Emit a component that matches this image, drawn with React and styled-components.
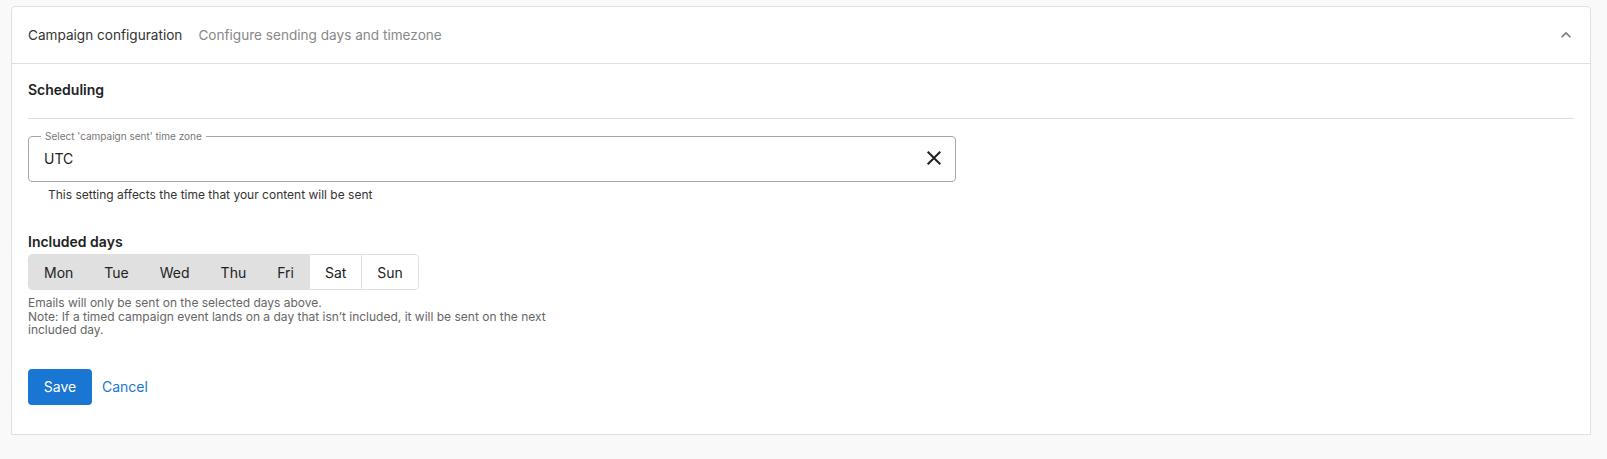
import styled, {createGlobalStyle} from 'styled-components';
import {useState} from "react";

const GlobalStyle = createGlobalStyle`
  html, body {
    margin: 0;
    padding: 0;
    background: #f9f9f9;
    font-family: Inter, "Noto Sans", "Liberation Sans", sans-serif;
    color: #222;
  }
  * { box-sizing: border-box; }
`;

const Page = styled.div`
  padding: 6px 16px 26px 11px;
`;

const Card = styled.section`
  background: #fff;
  border: 1px solid #e0e0e0;
  border-radius: 4px 4px 0 0;
`;

const Header = styled.div`
  display: flex;
  align-items: center;
  height: 57px;
  padding: 0 16px;
  border-bottom: 1px solid #e0e0e0;
  font-size: 13.6px;
`;

const Title = styled.span`
  color: #333;
`;

const Subtitle = styled.span`
  color: #888;
  margin-left: 16px;
  flex: 1;
`;

const ChevronButton = styled.span`
  display: flex;
  align-items: center;
  color: #777;
  margin-right: -2px;
`;

const Body = styled.div`
  padding: 16px 16px 29px 16px;
`;

const SectionTitle = styled.h3`
  margin: 0;
  font-size: 14px;
  line-height: 20px;
  font-weight: 600;
  color: #222;
`;

const Divider = styled.hr`
  border: 0;
  border-top: 1px solid #e0e0e0;
  margin: 18px 0 17px 0;
`;

const FieldBox = styled.div`
  position: relative;
  display: flex;
  align-items: center;
  width: 928px;
  height: 46px;
  padding: 0 14px 2px 15px;
  border: 1px solid #a8a8a8;
  border-radius: 4px;
  font-size: 14px;
  color: #222;
`;

const FieldLabel = styled.span`
  position: absolute;
  top: -7px;
  left: 12px;
  padding: 0 4px;
  background: #fff;
  font-size: 10px;
  line-height: 12px;
  color: #777;
`;

const FieldValue = styled.span`
  flex: 1;
`;

const ClearIcon = styled.span`
  display: flex;
  color: #222;
  margin-right: -5px;
`;

const HelperText = styled.div`
  margin: 5px 0 0 20px;
  font-size: 12px;
  line-height: 16px;
  color: #333;
`;

const DaysLabel = styled.div`
  margin-top: 29px;
  font-size: 14px;
  line-height: 20px;
  font-weight: 600;
  color: #222;
`;

const DayGroup = styled.div`
  display: inline-flex;
  margin-top: 2px;
  border: 1px solid #e0e0e0;
  border-radius: 4px;
  overflow: hidden;
`;

const DayButton = styled.button`
  height: 34px;
  padding: 0 15px;
  border: 0;
  border-left: 1px solid ${p => p.$selected ? 'transparent' : '#e0e0e0'};
  background: ${p => p.$selected ? '#e0e0e0' : '#fff'};
  font-family: inherit;
  font-size: 14px;
  color: #222;
  cursor: pointer;

  &:first-child {
    border-left: 0;
  }
`;

const Note = styled.div`
  margin-top: 6px;
  max-width: 540px;
  font-size: 12px;
  line-height: 13.5px;
  color: #666;
`;

const Actions = styled.div`
  display: flex;
  align-items: center;
  gap: 10px;
  margin-top: 32px;
`;

const SaveButton = styled.button`
  width: 64px;
  height: 36px;
  border: 0;
  border-radius: 4px;
  background: #1976d2;
  color: #fff;
  font-family: inherit;
  font-size: 14px;
  cursor: pointer;
`;

const CancelLink = styled.button`
  border: 0;
  background: none;
  padding: 0;
  color: #1976d2;
  font-family: inherit;
  font-size: 14px;
  cursor: pointer;
`;

const DAYS = ['Mon', 'Tue', 'Wed', 'Thu', 'Fri', 'Sat', 'Sun'];

export default function App() {
  const [selected, setSelected] = useState(['Mon', 'Tue', 'Wed', 'Thu', 'Fri']);

  const toggle = (d) => {
    setSelected(s => s.includes(d) ? s.filter(x => x !== d) : [...s, d]);
  };

  return (
    <>
      <GlobalStyle/>
      <Page>
        <Card>
          <Header>
            <Title>Campaign configuration</Title>
            <Subtitle>Configure sending days and timezone</Subtitle>
            <ChevronButton>
              <svg width="20" height="20" viewBox="0 0 24 24" fill="currentColor">
                <path d="M12 8l-6 6 1.41 1.41L12 10.83l4.59 4.58L18 14z"/>
              </svg>
            </ChevronButton>
          </Header>
          <Body>
            <SectionTitle>Scheduling</SectionTitle>
            <Divider/>
            <FieldBox>
              <FieldLabel>Select 'campaign sent' time zone</FieldLabel>
              <FieldValue>UTC</FieldValue>
              <ClearIcon>
                <svg width="24" height="24" viewBox="0 0 24 24" fill="currentColor">
                  <path d="M19 6.41 17.59 5 12 10.59 6.41 5 5 6.41 10.59 12 5 17.59 6.41 19 12 13.41 17.59 19 19 17.59 13.41 12z"/>
                </svg>
              </ClearIcon>
            </FieldBox>
            <HelperText>This setting affects the time that your content will be sent</HelperText>

            <DaysLabel>Included days</DaysLabel>
            <DayGroup>
              {DAYS.map(d => (
                <DayButton key={d} $selected={selected.includes(d)} onClick={() => toggle(d)}>{d}</DayButton>
              ))}
            </DayGroup>
            <Note>
              Emails will only be sent on the selected days above.<br/>
              Note: If a timed campaign event lands on a day that isn’t included, it will be sent on the next included day.
            </Note>

            <Actions>
              <SaveButton>Save</SaveButton>
              <CancelLink>Cancel</CancelLink>
            </Actions>
          </Body>
        </Card>
      </Page>
    </>
  );
}
